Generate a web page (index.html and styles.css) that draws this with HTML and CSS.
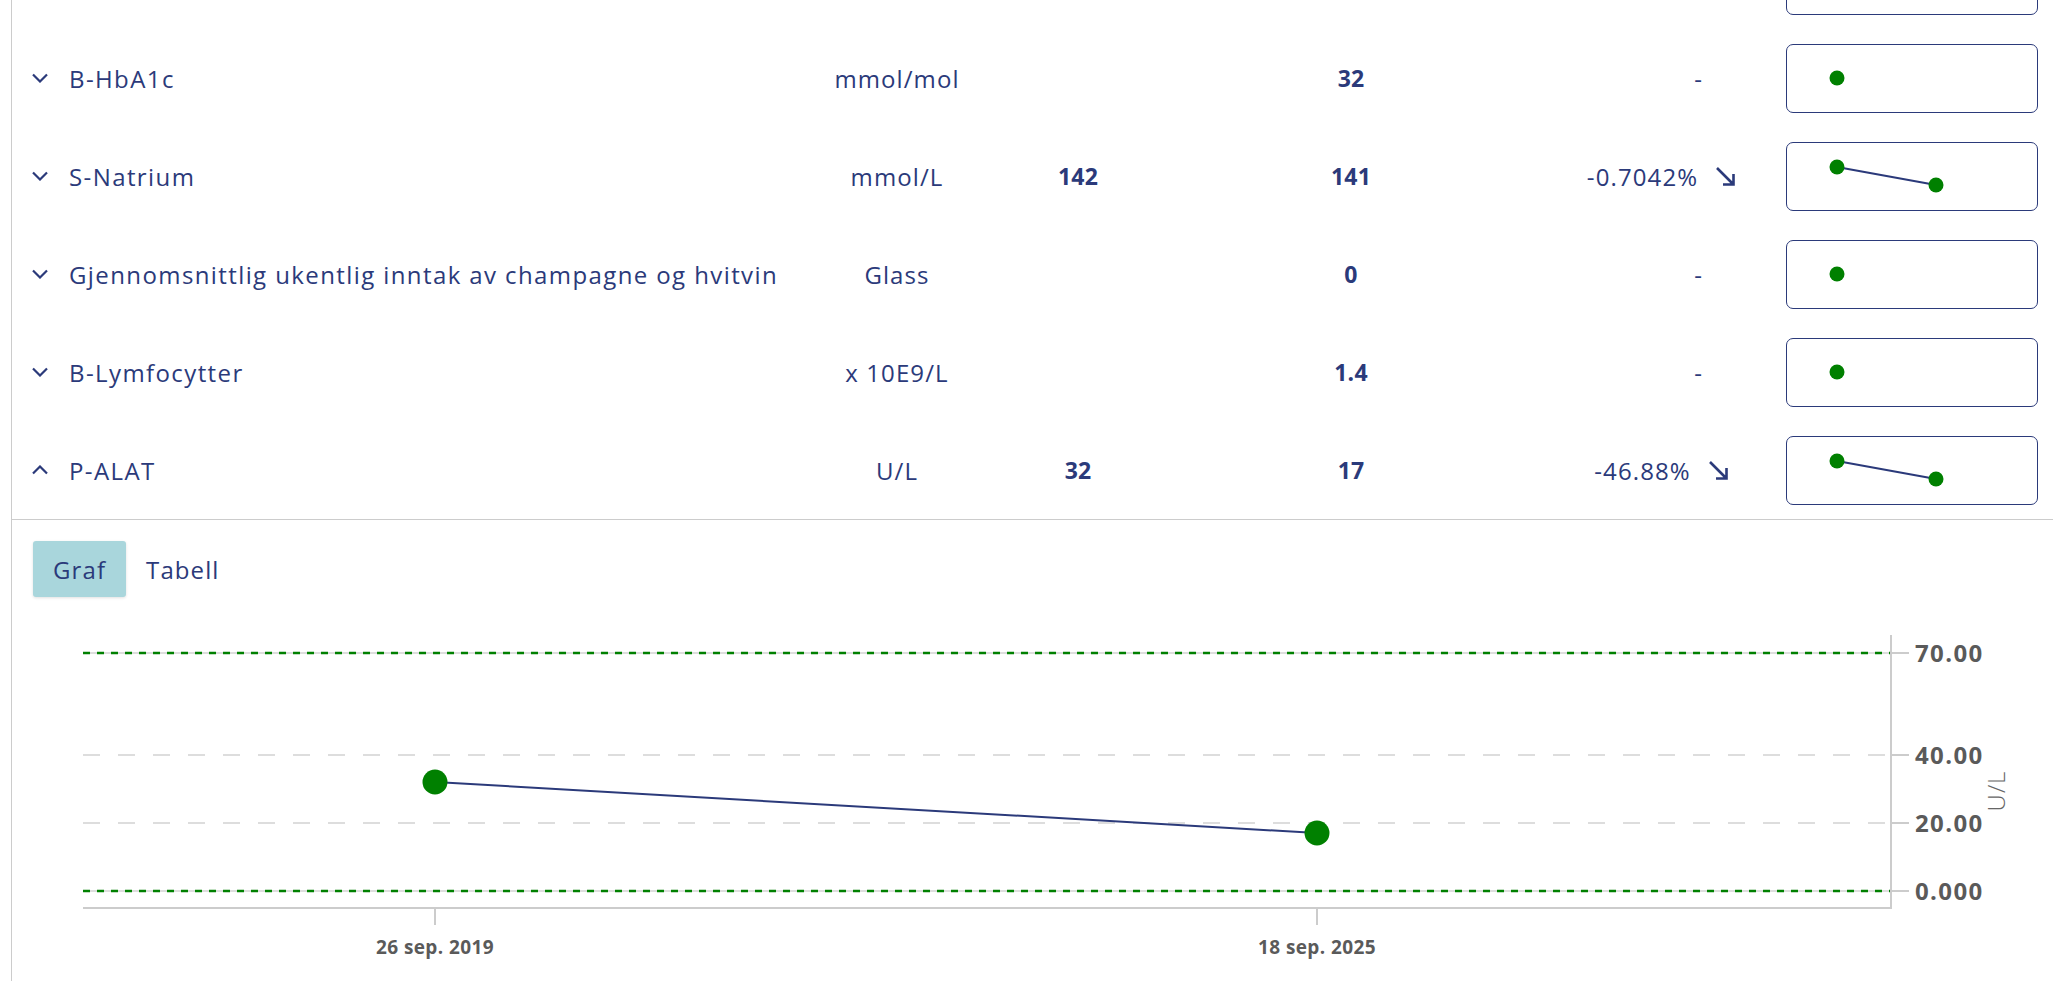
FILE: index.html
```html
<!DOCTYPE html>
<html lang="no">
<head>
<meta charset="utf-8">
<title>Prøvesvar</title>
<link rel="stylesheet" href="styles.css">
</head>
<body>
<div class="panel">
  <div class="row">
    <span class="toggle"></span>
    <span class="name"></span>
    <span class="unit"></span>
    <span class="val"></span>
    <span class="val"></span>
    <span class="change"></span>
    <span class="sparkcell"><span class="spark"><svg width="250" height="66" viewBox="0 0 250 66"><circle cx="50" cy="33" r="7.5" fill="#008000"/></svg></span></span>
  </div>
  <div class="row">
    <span class="toggle"><svg width="18" height="10" viewBox="0 0 18 10"><path d="M2 1.5 L9 8.5 L16 1.5" fill="none" stroke="#2b3a7a" stroke-width="2.2"/></svg></span>
    <span class="name">B-HbA1c</span>
    <span class="unit">mmol/mol</span>
    <span class="val"></span>
    <span class="val">32</span>
    <span class="change dash">-</span>
    <span class="sparkcell"><span class="spark"><svg width="250" height="66" viewBox="0 0 250 66"><circle cx="50" cy="33" r="7.5" fill="#008000"/></svg></span></span>
  </div>
  <div class="row">
    <span class="toggle"><svg width="18" height="10" viewBox="0 0 18 10"><path d="M2 1.5 L9 8.5 L16 1.5" fill="none" stroke="#2b3a7a" stroke-width="2.2"/></svg></span>
    <span class="name">S-Natrium</span>
    <span class="unit">mmol/L</span>
    <span class="val">142</span>
    <span class="val">141</span>
    <span class="change"><span class="pct">-0.7042%</span><svg class="arrow" width="21" height="21" viewBox="0 0 21 21"><path d="M2 2 L18.5 18.5 M18.5 8 L18.5 18.5 L8 18.5" fill="none" stroke="#2b3a7a" stroke-width="2.6"/></svg></span>
    <span class="sparkcell"><span class="spark"><svg width="250" height="66" viewBox="0 0 250 66"><line x1="50" y1="24" x2="149" y2="42" stroke="#2b3a7a" stroke-width="2"/><circle cx="50" cy="24" r="7.5" fill="#008000"/><circle cx="149" cy="42" r="7.5" fill="#008000"/></svg></span></span>
  </div>
  <div class="row">
    <span class="toggle"><svg width="18" height="10" viewBox="0 0 18 10"><path d="M2 1.5 L9 8.5 L16 1.5" fill="none" stroke="#2b3a7a" stroke-width="2.2"/></svg></span>
    <span class="name">Gjennomsnittlig ukentlig inntak av champagne og hvitvin</span>
    <span class="unit">Glass</span>
    <span class="val"></span>
    <span class="val">0</span>
    <span class="change dash">-</span>
    <span class="sparkcell"><span class="spark"><svg width="250" height="66" viewBox="0 0 250 66"><circle cx="50" cy="33" r="7.5" fill="#008000"/></svg></span></span>
  </div>
  <div class="row">
    <span class="toggle"><svg width="18" height="10" viewBox="0 0 18 10"><path d="M2 1.5 L9 8.5 L16 1.5" fill="none" stroke="#2b3a7a" stroke-width="2.2"/></svg></span>
    <span class="name">B-Lymfocytter</span>
    <span class="unit">x 10E9/L</span>
    <span class="val"></span>
    <span class="val">1.4</span>
    <span class="change dash">-</span>
    <span class="sparkcell"><span class="spark"><svg width="250" height="66" viewBox="0 0 250 66"><circle cx="50" cy="33" r="7.5" fill="#008000"/></svg></span></span>
  </div>
  <div class="row">
    <span class="toggle"><svg width="18" height="10" viewBox="0 0 18 10"><path d="M2 8.5 L9 1.5 L16 8.5" fill="none" stroke="#2b3a7a" stroke-width="2.2"/></svg></span>
    <span class="name">P-ALAT</span>
    <span class="unit">U/L</span>
    <span class="val">32</span>
    <span class="val">17</span>
    <span class="change"><span class="pct">-46.88%</span><svg class="arrow" width="21" height="21" viewBox="0 0 21 21"><path d="M2 2 L18.5 18.5 M18.5 8 L18.5 18.5 L8 18.5" fill="none" stroke="#2b3a7a" stroke-width="2.6"/></svg></span>
    <span class="sparkcell"><span class="spark"><svg width="250" height="66" viewBox="0 0 250 66"><line x1="50" y1="24" x2="149" y2="42" stroke="#2b3a7a" stroke-width="2"/><circle cx="50" cy="24" r="7.5" fill="#008000"/><circle cx="149" cy="42" r="7.5" fill="#008000"/></svg></span></span>
  </div>
  <div class="detail">
    <div class="tabs">
      <span class="tab active">Graf</span>
      <span class="tab">Tabell</span>
    </div>
    <svg class="chart" width="2041" height="384" viewBox="0 0 2041 384">
      <g stroke="#dddddd" stroke-width="2">
        <line x1="71" y1="56" x2="1879" y2="56"/>
        <line x1="71" y1="294" x2="1879" y2="294"/>
        <line x1="71" y1="158" x2="1879" y2="158" stroke-dasharray="17 18"/>
        <line x1="71" y1="226" x2="1879" y2="226" stroke-dasharray="17 18"/>
      </g>
      <g stroke="#008000" stroke-width="2.5" stroke-dasharray="7 7">
        <line x1="71" y1="56" x2="1879" y2="56"/>
        <line x1="71" y1="294" x2="1879" y2="294"/>
      </g>
      <g stroke="#cccccc" stroke-width="2">
        <line x1="1879" y1="38" x2="1879" y2="312"/>
        <line x1="71" y1="311" x2="1880" y2="311"/>
        <line x1="1879" y1="56" x2="1897" y2="56"/>
        <line x1="1879" y1="158" x2="1897" y2="158"/>
        <line x1="1879" y1="226" x2="1897" y2="226"/>
        <line x1="1879" y1="294" x2="1897" y2="294"/>
        <line x1="423" y1="311" x2="423" y2="328"/>
        <line x1="1305" y1="311" x2="1305" y2="328"/>
      </g>
      <g class="ylab">
        <text x="1903" y="64.5">70.00</text>
        <text x="1903" y="166.5">40.00</text>
        <text x="1903" y="234.5">20.00</text>
        <text x="1903" y="302.5">0.000</text>
      </g>
      <text class="yunit" x="0" y="0" transform="translate(1993 194) rotate(-90)">U/L</text>
      <g class="xlab">
        <text x="423" y="356.5">26 sep. 2019</text>
        <text x="1305" y="356.5">18 sep. 2025</text>
      </g>
      <line x1="423" y1="185" x2="1305" y2="236" stroke="#2b3a7a" stroke-width="2"/>
      <circle cx="423" cy="185" r="12.5" fill="#008000"/>
      <circle cx="1305" cy="236" r="12.5" fill="#008000"/>
    </svg>
  </div>
</div>
</body>
</html>
```
FILE: styles.css
```css
html, body {
  margin: 0;
  padding: 0;
  background: #ffffff;
  overflow: hidden;
}

body {
  font-family: "Open Sans", "Noto Sans", sans-serif;
  color: #2b3a7a;
}

.panel {
  margin: -69px 14px 0 11px;
  border-left: 1px solid #cccccc;
}

.row {
  display: grid;
  grid-template-columns: 38px 730px 196px 166px 380px 241px 256px;
  align-items: center;
  height: 98px;
  box-sizing: border-box;
  padding: 0 14px 0 19px;
  font-size: 24px;
  letter-spacing: 1.1px;
}

.toggle {
  display: flex;
  align-items: center;
}

.toggle svg {
  display: block;
}

.name {
  white-space: nowrap;
  font-weight: 400;
  letter-spacing: 1.4px;
}

.unit {
  text-align: center;
  white-space: nowrap;
}

.val {
  text-align: center;
  font-weight: 700;
  font-size: 23px;
  letter-spacing: 0.2px;
}

.change {
  display: flex;
  justify-content: center;
  align-items: center;
  gap: 17px;
  white-space: nowrap;
}

.change.dash {
  justify-content: flex-end;
  padding-right: 79px;
}

.arrow {
  display: block;
}

.sparkcell {
  display: flex;
  justify-content: flex-end;
}

.spark {
  display: block;
  width: 252px;
  height: 69px;
  box-sizing: border-box;
  border: 1.5px solid #2b3a7a;
  border-radius: 7px;
  overflow: hidden;
}

.spark svg {
  display: block;
}

.detail {
  border-top: 1px solid #cccccc;
}

.tabs {
  display: flex;
  padding: 21px 0 0 21px;
}

.tab {
  display: flex;
  align-items: center;
  height: 56px;
  padding: 0 20px;
  font-size: 24px;
  letter-spacing: 1.1px;
  color: #2b3a7a;
  border-radius: 3px;
}

.tab.active {
  background: #a9d6dc;
  box-shadow: 0 1px 3px rgba(0, 0, 0, 0.12);
}

.chart {
  display: block;
}

.ylab text {
  font-family: "Open Sans", sans-serif;
  font-size: 24px;
  font-weight: 700;
  letter-spacing: 1.4px;
  fill: #5a5a5a;
}

.xlab text {
  font-family: "Open Sans", sans-serif;
  font-size: 19px;
  font-weight: 700;
  letter-spacing: 0.4px;
  fill: #5a5a5a;
  text-anchor: middle;
}

.yunit {
  font-family: "Open Sans", sans-serif;
  font-size: 24px;
  font-weight: 300;
  letter-spacing: 1px;
  fill: #666666;
  text-anchor: middle;
}
```
